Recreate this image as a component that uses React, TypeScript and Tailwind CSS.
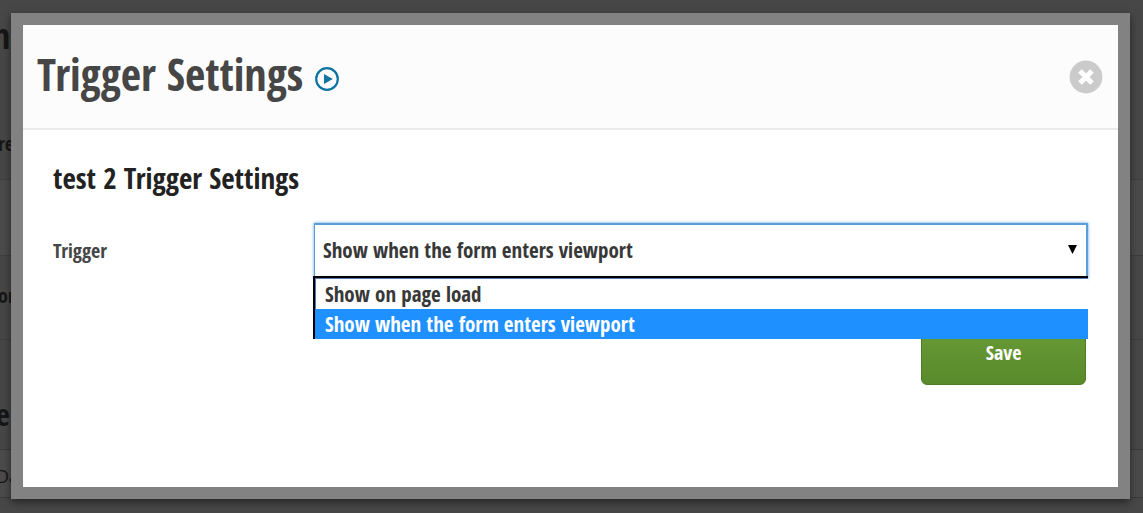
import { useState } from "react"

const triggers = [
    { value: "load", label: "Show on page load" },
    { value: "viewport", label: "Show when the form enters viewport" },
]

// Dimmed page that sits behind the dialog
function Backdrop() {
    return (
        <div className="absolute inset-0 overflow-hidden bg-[#474747] font-bold text-[#161616]" aria-hidden="true">
            <div className="-ml-2 flex flex-col">
                <div className="h-[105px] pt-4 text-4xl">n</div>
                <div className="flex h-[75px] items-center border-b border-[#3e3e3e] pt-1 pl-1.5 text-xl">re</div>
                <div className="h-[76px] border-b border-[#3e3e3e] bg-[#4b4b4b]" />
                <div className="flex h-[84px] items-center border-b border-[#3e3e3e] pb-1 pl-1.5 text-xl">or</div>
                <div className="flex h-[110px] items-end border-b border-[#3a3a3a] pb-4 pl-1 text-3xl">e</div>
                <div className="flex h-12 items-center border-b border-[#3a3a3a] bg-[#4b4b4b] pt-1 pl-1 font-['Open_Sans',sans-serif] text-lg font-normal">
                    Da
                </div>
            </div>
        </div>
    )
}

export default function App() {
    const [trigger, setTrigger] = useState("viewport")
    const [isOpen, setIsOpen] = useState(true)

    return (
        <div className="relative flex h-screen pt-[13px] pr-[13px] pb-[14px] pl-[11px] font-['Open_Sans_Condensed','Liberation_Sans_Narrow','Open_Sans',sans-serif]">
            <Backdrop />

            <div role="dialog" aria-labelledby="dialog-title" className="relative flex flex-1 flex-col border-12 border-[#828282] bg-white shadow-[0_3px_8px_rgba(0,0,0,0.5)]">
                <header className="flex h-[105px] items-center justify-between border-b-2 border-[#ebebeb] bg-[#fcfcfc] pr-[15px] pl-[14px]">
                    <div className="flex items-center gap-3">
                        <h1 id="dialog-title" className="pb-1.5 text-[44px] leading-[60px] font-bold text-[#464646]">Trigger Settings</h1>
                        <a href="#video" aria-label="Watch video" className="pt-1">
                            <svg viewBox="0 0 24 24" className="size-6">
                                <circle cx="12" cy="12" r="10.8" fill="none" stroke="#0e74a2" strokeWidth="2.2" />
                                <path d="M9 7v10l8.8-5z" fill="#0e74a2" />
                            </svg>
                        </a>
                    </div>
                    <button type="button" aria-label="Close">
                        <svg viewBox="0 0 34 34" className="size-[34px]">
                            <circle cx="17" cy="17" r="16.4" fill="#cbcbcb" />
                            <path d="M11 11l12 12M23 11L11 23" stroke="#fff" strokeWidth="5" />
                        </svg>
                    </button>
                </header>

                <div className="pt-[27px] pr-[30px] pl-[30px]">
                    <h2 className="text-[29px] leading-[42px] font-bold text-[#222]">test 2 Trigger Settings</h2>

                    <div className="mt-6 flex items-center">
                        <label htmlFor="trigger" className="w-[261px] shrink-0 text-xl font-bold text-[#464646]">Trigger</label>
                        <div className="relative flex-1">
                            <select
                                id="trigger"
                                value={trigger}
                                onChange={(e) => setTrigger(e.target.value)}
                                className="block h-14 w-full appearance-none border-2 border-l border-[#5b9dd9] bg-white px-2 text-[21px] font-bold text-[#383838] shadow-[0_0_3px_#5b9dd9] outline-none"
                            >
                                {triggers.map((t) => (
                                    <option key={t.value} value={t.value}>{t.label}</option>
                                ))}
                            </select>
                            <svg viewBox="0 0 9 9" className="pointer-events-none absolute top-[22px] right-[11px] size-[9px]">
                                <path d="M0 0h9L4.5 9z" />
                            </svg>

                            {isOpen && (
                                <ul role="listbox" aria-label="Trigger" className="absolute top-[53px] right-0 -left-px z-10 border-t-2 border-l-2 border-black bg-white text-[21px] font-bold">
                                    {triggers.map((t) => (
                                        <li
                                            key={t.value}
                                            role="option"
                                            aria-selected={t.value === trigger}
                                            onClick={() => {
                                                setTrigger(t.value)
                                                setIsOpen(false)
                                            }}
                                            className={`border-l pl-[9px] leading-[30px] ${t.value === trigger ? "border-[#1e90ff] bg-[#1e90ff] text-white" : "border-t border-[#5673b5] text-[#383838]"}`}
                                        >
                                            {t.label}
                                        </li>
                                    ))}
                                </ul>
                            )}
                        </div>
                    </div>

                    <div className="mt-[42px] flex justify-end pr-0.5">
                        <button type="button" className="h-16 w-[165px] rounded-md border border-[#4f7a27] bg-linear-to-b from-[#699c37] to-[#5a8a2b] text-xl font-bold text-white">
                            Save
                        </button>
                    </div>
                </div>
            </div>
        </div>
    )
}
